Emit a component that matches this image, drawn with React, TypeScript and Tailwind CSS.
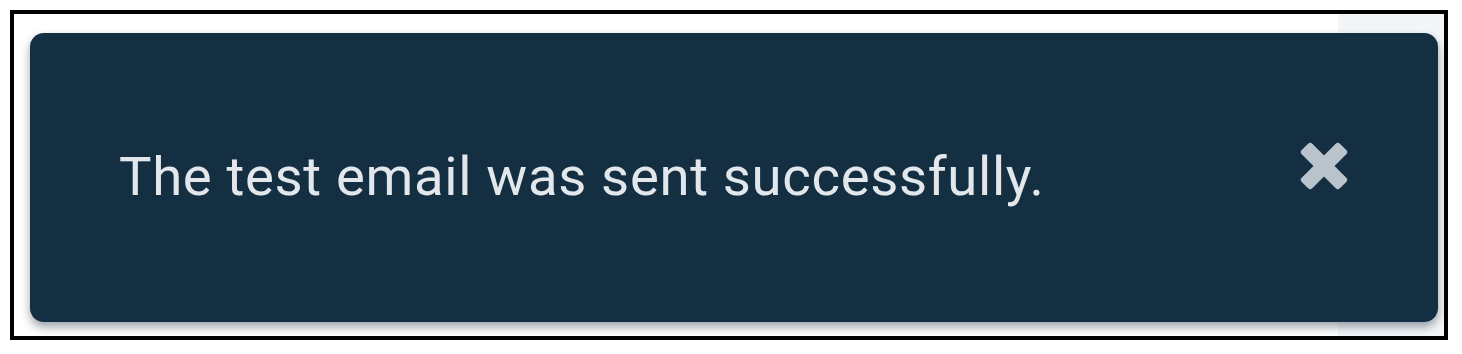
import React from 'react';

const CloseIcon: React.FC = () => (
  <svg width="48" height="48" viewBox="0 0 48 48" aria-hidden="true">
    <g fill="#b9c3cb" transform="rotate(45 24 24)">
      <rect x="16.5" y="-3" width="15" height="54" rx="3" />
      <rect x="-3" y="16.5" width="54" height="15" rx="3" />
    </g>
  </svg>
);

const App: React.FC = () => {
  return (
    <div className="w-[1462px] h-[354px] bg-white p-[10px] font-['Roboto',sans-serif]">
      <div className="h-[330px] w-[1438px] border-4 border-black bg-[linear-gradient(to_right,#ffffff_1324px,#f3f6f9_1324px)] pl-[16px] pr-[6px] pt-[19px] pb-[14px]">
        <div className="flex h-full items-center justify-between rounded-[14px] bg-[#142f42] pl-[89px] pr-[90px] shadow-[0_5px_10px_rgba(40,50,70,0.45)]">
          <span className="-mt-[2px] text-[54.5px] leading-none tracking-[0.65px] text-[#e2e7ec]">
            The test email was sent successfully.
          </span>
          <button className="-mt-[24px] flex items-center justify-center" aria-label="Close">
            <CloseIcon />
          </button>
        </div>
      </div>
    </div>
  );
};

export default App;
